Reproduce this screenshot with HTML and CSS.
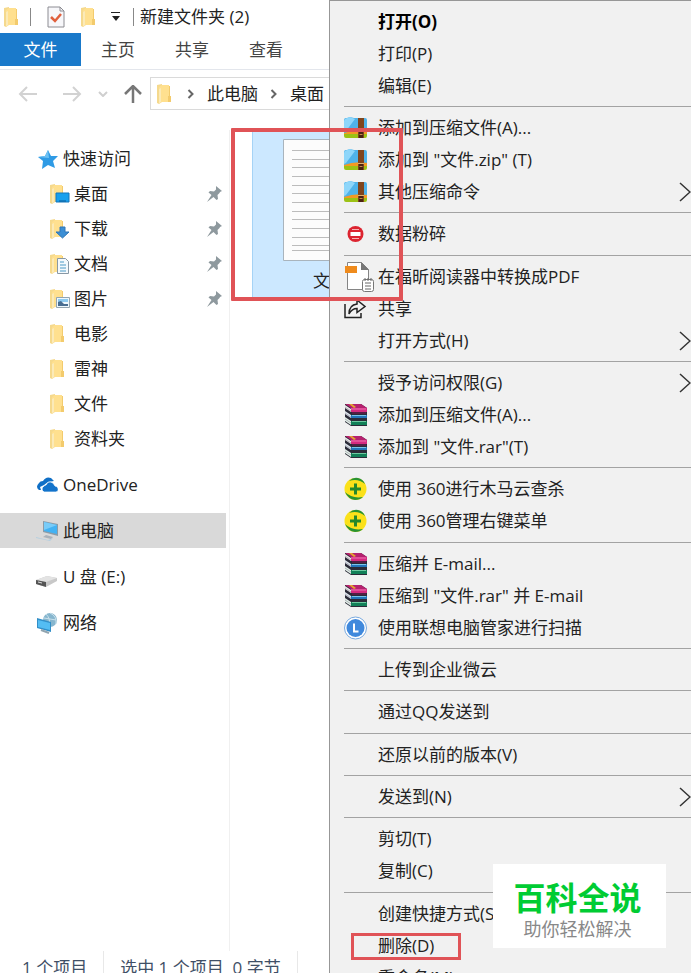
FILE: index.html
```html
<!DOCTYPE html>
<html lang="zh-CN">
<head>
  <meta charset="UTF-8" />
  <meta name="viewport" content="width=device-width, initial-scale=1.0"/>
  <title>新建文件夹 (2)</title>
  <link rel="stylesheet" href="styles.css">
</head>
<body>

  <!-- shared icons -->
  <svg class="sprite" aria-hidden="true">
    <symbol id="folder" viewBox="0 0 14 20">
      <path d="M0 1 5 0v18l-3 2-2-1z" fill="#f5d98d"/>
      <path d="M2 3 5 1h7v11h1.500v6H4l-2 2z" fill="#ffe08f"/>
      <path d="M12 2v10h-1v6h3v-6h-1V2z" fill="#f3cb6d"/>
      <path d="M2 5v15l2-2V4z" fill="#fbeab8"/>
    </symbol>
    <symbol id="pin" viewBox="0 0 16 16">
      <path d="m10 0 6 5-2 1-.5 1-2 2 .5 4-1.500 1-3-3-6.500 5 4.500-7-3-2.500L4 5l4 .5 2-2z" fill="#8e999e"/>
    </symbol>
    <symbol id="arrow" viewBox="0 0 12 20">
      <path d="m1 1 10 9-10 9" fill="none" stroke="#333" stroke-width="1.500"/>
    </symbol>
    <symbol id="crumb" viewBox="0 0 8 10">
      <path d="m1.500 1 4 4-4 4" fill="none" stroke="#666" stroke-width="2"/>
    </symbol>
    <symbol id="zip" viewBox="0 0 24 24">
      <rect x="0" y="16" width="23" height="6" rx="2" fill="#9cc216"/>
      <path d="M0 14h23v4H0z" fill="#f39a23"/>
      <path d="M0 4q0-2 2-2h1l3-1 4 1h11q2 0 2 2v11q-12-2-23 2z" fill="#4fb3ea"/>
      <path d="M0 5q0-2 3-3l3-1 5 2L2 15l-2 1z" fill="#8ed6fa"/>
      <path d="M14 2h6v20h-6z" fill="#80451d"/>
      <path d="M15 16h4v6h-4z" fill="#4a2412"/>
      <path d="M14 15.500h6" stroke="#e0b070"/>
      <path d="M15.500 18.500h3" stroke="#c98a4a"/>
    </symbol>
    <symbol id="rar" viewBox="0 0 24 24">
      <path d="M1 1h16l6 4v18H7l-6-4z" fill="#2b2b38"/>
      <path d="M1 1h16l6 4H7z" fill="#b5216f"/>
      <path d="M7 5h16v4H7z" fill="#d42a80"/>
      <path d="M7 6h15" stroke="#ee74b2"/>
      <path d="m1 2 6 4v3L1 5z" fill="#efe9ea"/>
      <path d="M8 9.500h14v1H8z" fill="#7d1450"/>
      <path d="m1 8 6 4v3l-6-4z" fill="#dfe6ee"/>
      <path d="M7 12h16v3H7z" fill="#2374b8"/>
      <path d="M8 12.500h14" stroke="#7cc3ea"/>
      <path d="m1 14 6 4v4l-6-4z" fill="#e3efe8"/>
      <path d="M7 18h16v4H7z" fill="#128058"/>
      <path d="M8 18.500h14" stroke="#6ccaa0"/>
      <path d="m1 4 6 4M1 10l6 4M1 16l6 4" stroke="#8c8c98" stroke-width=".6"/>
      <path d="m5 1 3 0 4 3-2 1z" fill="#e3a52d"/>
    </symbol>
    <symbol id="safe" viewBox="0 0 24 24">
      <circle cx="11.500" cy="12" r="11" fill="#fbe11a"/>
      <path d="M5 4Q9 0 14 1q5 1 7 6-7-6-16-3zM1 15q7 7 18 5-3 3-8 3-7-1-10-8z" fill="#299333"/>
      <path d="M11.500 6.500v11M6 12h11" stroke="#25882b" stroke-width="3"/>
    </symbol>
  </svg>

  <div class="explorer">
    <header class="title-bar">
      <svg class="folder"><use href="#folder"/></svg>
      <span class="divider"></span>
      <button class="quick" aria-label="属性">
        <svg width="18" height="22" viewBox="0 0 18 22"><path d="M1 1h12l4 4v16H1z" fill="#f7f7fa" stroke="#8c8c92"/><path d="M13 1v4h4" fill="none" stroke="#8c8c92"/><path d="m4 11 4 4 6-7" fill="none" stroke="#e0603d" stroke-width="2.500"/></svg>
      </button>
      <button class="quick" aria-label="新建文件夹"><svg class="folder"><use href="#folder"/></svg></button>
      <button class="quick" aria-label="自定义快速访问工具栏">
        <svg width="10" height="9" viewBox="0 0 10 9"><path d="M0 0h9v1H0zM1 4h8L5 9z" fill="#222"/></svg>
      </button>
      <span class="divider"></span>
      <h1>新建文件夹 (2)</h1>
    </header>

    <nav class="tabs">
      <button class="file-tab">文件</button>
      <button>主页</button>
      <button>共享</button>
      <button>查看</button>
    </nav>

    <div class="nav-bar">
      <button aria-label="后退"><svg width="20" height="16" viewBox="0 0 20 16"><path d="M9 1 2 8l7 7M2 8h17" fill="none" stroke="#d2d2d2" stroke-width="2"/></svg></button>
      <button aria-label="前进"><svg width="20" height="16" viewBox="0 0 20 16"><path d="m11 1 7 7-7 7M18 8H1" fill="none" stroke="#d2d2d2" stroke-width="2"/></svg></button>
      <button aria-label="最近浏览的位置"><svg width="10" height="6" viewBox="0 0 10 6"><path d="m1 1 4 4 4-4" fill="none" stroke="#cfcfcf" stroke-width="2"/></svg></button>
      <button aria-label="上移"><svg width="18" height="18" viewBox="0 0 18 18"><path d="m1 9 8-8 8 8M9 1v17" fill="none" stroke="#777" stroke-width="2.500"/></svg></button>
      <div class="address">
        <svg class="folder"><use href="#folder"/></svg>
        <svg class="crumb"><use href="#crumb"/></svg>
        <a href="#pc">此电脑</a>
        <svg class="crumb"><use href="#crumb"/></svg>
        <a href="#desktop">桌面</a>
      </div>
    </div>

    <div class="content">
      <aside class="sidebar">
        <a class="place" href="#quick">
          <svg viewBox="0 0 22 22"><path d="m12 2 3 6 7 0-5 5 2 7-7-3-6 4 1-8-5-4 7-1z" fill="#2f9be5"/><path d="m12 2 1 8-11-1 7-1z" fill="#6dc1f3"/></svg>
          快速访问
        </a>
        <a class="place sub" href="#desktop">
          <svg viewBox="0 0 20 20"><use href="#folder" width="14" height="20"/><path d="M6 9h13v9H6z" fill="#18a0ee" stroke="#1476bb"/><path d="M9 17h7" stroke="#0d5b94"/></svg>
          桌面
          <svg class="pin"><use href="#pin"/></svg>
        </a>
        <a class="place sub" href="#downloads">
          <svg viewBox="0 0 20 20"><use href="#folder" width="14" height="20"/><path d="M10 8h5v5h4l-6.500 6L6 13h4z" fill="#3c8fd5" stroke="#2f77b8"/></svg>
          下载
          <svg class="pin"><use href="#pin"/></svg>
        </a>
        <a class="place sub" href="#documents">
          <svg viewBox="0 0 20 20"><use href="#folder" width="14" height="20"/><path d="M7.500 4.500h8l3 3v12h-11z" fill="#f4f9fc" stroke="#8898a5"/><path d="M10 8h4M10 11h6M10 14h6M10 17h6" stroke="#4d9ac6"/></svg>
          文档
          <svg class="pin"><use href="#pin"/></svg>
        </a>
        <a class="place sub" href="#pictures">
          <svg viewBox="0 0 20 20"><use href="#folder" width="14" height="20"/><path d="M6.500 8.500h13v10h-13z" fill="#eef7fc" stroke="#94a5b0"/><path d="M8 10h10v3H8z" fill="#8dcaf0"/><path d="m8 17 0-4 3-1 3 3 4 0v2z" fill="#496d91"/></svg>
          图片
          <svg class="pin"><use href="#pin"/></svg>
        </a>
        <a class="place sub" href="#movies"><svg viewBox="0 0 20 20"><use href="#folder" width="14" height="20"/></svg>电影</a>
        <a class="place sub" href="#leishen"><svg viewBox="0 0 20 20"><use href="#folder" width="14" height="20"/></svg>雷神</a>
        <a class="place sub" href="#files"><svg viewBox="0 0 20 20"><use href="#folder" width="14" height="20"/></svg>文件</a>
        <a class="place sub" href="#data"><svg viewBox="0 0 20 20"><use href="#folder" width="14" height="20"/></svg>资料夹</a>

        <a class="place root" href="#onedrive">
          <svg viewBox="0 0 22 22"><path d="M5 16H3q-4-3 0-7 1-2 4-2 3-5 8-3l3 3-6 1-4 3-4 2z" fill="#0f6fc6"/><path d="M8 18q-4-3 0-6 1-1 2-1 2-5 7-2l2 3q4 1 3 5l-2 1z" fill="#1273cb" stroke="#fff" stroke-width=".7"/></svg>
          OneDrive
        </a>
        <a class="place root selected" href="#pc">
          <svg viewBox="0 0 22 22"><path d="m7 1 15 3v12L7 12z" fill="#8b9ba7"/><path d="m8 2 13 3v9L8 11z" fill="#42b2f3"/><path d="m8 2 13 3-13 5z" fill="#79ccf8"/><path d="m10 15 7 2-2 2-8-2z" fill="#a9b2ba"/><path d="m0 17 12 3 5-2-3 3-14-3z" fill="#b5cfe0"/></svg>
          此电脑
        </a>
        <a class="place root" href="#usb">
          <svg viewBox="0 0 22 22"><path d="m0 14 11-4 10 2v3l-11 6-10-3z" fill="#c8c8c8"/><path d="m0 14 11-4 10 2-11 4z" fill="#e3e3e3"/><path d="m0 14 10 2v5L0 18z" fill="#555"/><path d="m2 16 4 1" stroke="#ddd"/></svg>
          U 盘 (E:)
        </a>
        <a class="place root" href="#network">
          <svg viewBox="0 0 22 22"><circle cx="14" cy="8" r="7" fill="#87b6ce"/><path d="M10 2q5 5 3 12M14 1q7 3 6 11M8 6l12 2" fill="none" stroke="#c9e1ec"/><path d="m1 6 14 4v10L1 16z" fill="#328fc8"/><path d="m2 8 12 3v7L2 15z" fill="#54bdf3"/><path d="m5 18 8 3" stroke="#91a4af" stroke-width="2"/></svg>
          网络
        </a>
      </aside>

      <main class="files">
        <a class="file" href="#file">
          <svg width="94" height="122" viewBox="0 0 94 122">
            <path d="M.5.5h93v121H.5z" fill="#fcfcfc" stroke="#a9b4bd"/>
            <path d="M9 11.500h76M9 20.500h76M9 28.500h76M9 37.500h76M9 46.500h76M9 54.500h76M9 63.500h76M9 72.500h76M9 80.500h76M9 89.500h76M9 98.500h76M9 106.500h76M9 111.500h76" stroke="#bcbcbc"/>
          </svg>
          <span>文件</span>
        </a>
      </main>
    </div>

    <footer class="status">
      <span class="count">1 个项目</span>
      <span class="chosen">选中 1 个项目&nbsp; 0 字节</span>
    </footer>
  </div>

  <div class="menu" role="menu">
    <div class="group">
      <button class="default" role="menuitem">打开(O)</button>
      <button role="menuitem">打印(P)</button>
      <button role="menuitem">编辑(E)</button>
    </div>
    <div class="group">
      <button role="menuitem"><svg class="icon"><use href="#zip"/></svg>添加到压缩文件(A)...</button>
      <button role="menuitem"><svg class="icon"><use href="#zip"/></svg>添加到 "文件.zip" (T)</button>
      <button role="menuitem"><svg class="icon"><use href="#zip"/></svg>其他压缩命令<svg class="arrow"><use href="#arrow"/></svg></button>
    </div>
    <div class="group">
      <button role="menuitem">
        <svg class="icon" viewBox="0 0 24 24"><circle cx="11.500" cy="12" r="8" fill="#dc2430"/><path d="M6.500 10h10v4h-10z" fill="#fff"/><path d="M8 7.500h7M8 16.500h7" stroke="#f5b3b5"/></svg>数据粉碎
      </button>
    </div>
    <div class="group">
      <button role="menuitem">
        <svg class="icon pdf" viewBox="0 0 31 32"><path d="M3.500 1.500h14l7 7v20h-21z" fill="#fff" stroke="#858585"/><path d="M17 1v8h8z" fill="#777"/><path d="M1 5h12v7H1z" fill="#ef8b1d"/><rect x="18.500" y="18.500" width="11" height="12" rx="2" fill="#fff" stroke="#777"/><path d="M21 22h6M21 25h6M21 28h6M21 17v3M24 17v3M27 17v3" stroke="#666"/></svg>在福昕阅读器中转换成PDF
      </button>
      <button role="menuitem">
        <svg class="icon" viewBox="0 0 24 24"><path d="M1 7v13.500h16V16" fill="none" stroke="#222" stroke-width="1.500"/><path d="M5 17q0-9 8-10V3l8 6.500-8 6v-4q-5 0-8 5.500z" fill="#f1f1f1" stroke="#222" stroke-width="1.500"/></svg>共享
      </button>
      <button role="menuitem">打开方式(H)<svg class="arrow"><use href="#arrow"/></svg></button>
    </div>
    <div class="group">
      <button role="menuitem">授予访问权限(G)<svg class="arrow"><use href="#arrow"/></svg></button>
      <button role="menuitem"><svg class="icon"><use href="#rar"/></svg>添加到压缩文件(A)...</button>
      <button role="menuitem"><svg class="icon"><use href="#rar"/></svg>添加到 "文件.rar"(T)</button>
    </div>
    <div class="group">
      <button role="menuitem"><svg class="icon"><use href="#safe"/></svg>使用 360进行木马云查杀</button>
      <button role="menuitem"><svg class="icon"><use href="#safe"/></svg>使用 360管理右键菜单</button>
    </div>
    <div class="group">
      <button role="menuitem"><svg class="icon"><use href="#rar"/></svg>压缩并 E-mail...</button>
      <button role="menuitem"><svg class="icon"><use href="#rar"/></svg>压缩到 "文件.rar" 并 E-mail</button>
      <button role="menuitem">
        <svg class="icon" viewBox="0 0 24 24"><circle cx="11.500" cy="12" r="11" fill="#fff" stroke="#78a9df"/><circle cx="11.500" cy="12" r="9" fill="#4089dc"/><path d="M10 7.500v8h4.500" fill="none" stroke="#fff" stroke-width="2"/></svg>使用联想电脑管家进行扫描
      </button>
    </div>
    <div class="group">
      <button role="menuitem">上传到企业微云</button>
    </div>
    <div class="group">
      <button role="menuitem">通过QQ发送到</button>
    </div>
    <div class="group">
      <button role="menuitem">还原以前的版本(V)</button>
    </div>
    <div class="group">
      <button role="menuitem">发送到(N)<svg class="arrow"><use href="#arrow"/></svg></button>
    </div>
    <div class="group">
      <button role="menuitem">剪切(T)</button>
      <button role="menuitem">复制(C)</button>
    </div>
    <div class="group">
      <button role="menuitem">创建快捷方式(S)</button>
      <button class="marked" role="menuitem">删除(D)</button>
      <button role="menuitem">重命名(M)</button>
    </div>
  </div>

  <div class="highlight"></div>

  <div class="brand">
    <strong>百科全说</strong>
    <span>助你轻松解决</span>
  </div>

</body>
</html>
```
FILE: styles.css
```css
*,
*::before {
  box-sizing: border-box;
}

body {
  position: relative;
  height: 100vh;
  margin: 0;
  overflow: hidden;
  font-family: "Open Sans", "Noto Sans CJK SC", sans-serif;
  font-size: 17px;
  line-height: 24px;
  color: #222;
  background: #fff;
  white-space: nowrap;
}

button {
  padding: 0;
  border: none;
  background: none;
  font: inherit;
  color: inherit;
}

a {
  color: inherit;
  text-decoration: none;
}

svg {
  flex: none;
}

.sprite {
  position: absolute;
  width: 0;
  height: 0;
}

.folder {
  width: 14px;
  height: 20px;
}

/* Explorer window */
.explorer {
  display: flex;
  flex-direction: column;
  height: 100%;
}

.title-bar {
  display: flex;
  align-items: center;
  height: 33px;
  padding-left: 4px;
}

.title-bar .divider {
  width: 1px;
  height: 18px;
  margin-left: 12px;
  background: #888;
}

.quick {
  display: flex;
  margin-left: 16px;
}

.title-bar .divider + h1 {
  margin: 0 0 0 6px;
  font-size: 17px;
  font-weight: normal;
}

.tabs {
  display: flex;
  height: 37px;
  padding-bottom: 3px;
  border-bottom: 1px solid #e3e6ec;
  color: #444;
}

.tabs button {
  width: 74px;
}

.tabs .file-tab {
  width: 81px;
  background: #1979ca;
  color: #fff;
}

.nav-bar {
  display: flex;
  align-items: center;
  gap: 16px;
  padding: 7px 0 0 18px;
}

.nav-bar button {
  display: flex;
}

.nav-bar button:nth-child(2) {
  margin-left: 8px;
}

.address {
  display: flex;
  flex: 1;
  align-items: center;
  gap: 12px;
  height: 33px;
  margin-left: -8px;
  padding-left: 6px;
  border: 1px solid #dadada;
}

.crumb {
  width: 8px;
  height: 10px;
}

.address .folder {
  margin-right: 4px;
}

.content {
  display: flex;
  flex: 1;
  min-height: 0;
  padding-top: 20px;
}

.sidebar {
  width: 230px;
  padding: 11px 3px 0 0;
  border-right: 1px solid #f0f0f0;
}

.place {
  display: flex;
  align-items: center;
  gap: 5px;
  height: 35px;
  padding: 0 4px 0 36px;
}

.place svg {
  width: 22px;
  height: 22px;
}

.place.sub {
  gap: 4px;
  padding-left: 50px;
}

.place.sub svg {
  width: 20px;
  height: 20px;
}

.place.sub .pin {
  width: 16px;
  height: 16px;
  margin-left: auto;
}

.place.root {
  margin-top: 11px;
}

.place.selected {
  background: #d9d9d9;
}

.files {
  flex: 1;
  padding-left: 22px;
}

.file {
  display: flex;
  flex-direction: column;
  align-items: center;
  gap: 8px;
  width: 156px;
  height: 168px;
  padding-top: 8px;
  border: 1px solid #a5d3f6;
  background: #cce8ff;
}

.status {
  display: flex;
  height: 22px;
  padding-left: 22px;
  overflow: hidden;
  line-height: 34px;
  color: #3f4f66;
}

.status span {
  padding-right: 16px;
  border-right: 1px solid #e8e8e8;
}

.status .chosen {
  padding-left: 16px;
}

/* Context menu */
.menu {
  position: absolute;
  top: 0;
  bottom: 0;
  left: 329px;
  right: 0;
  padding-left: 14px;
  overflow: hidden;
  border-top: 1px solid #979797;
  border-left: 1px solid #979797;
  background: #f1f1f1;
}

.group {
  padding: 5px 0 4px;
  border-bottom: 1px solid #a3a3a3;
}

.group:nth-child(3n) {
  padding-bottom: 5px;
}

.group button {
  position: relative;
  display: flex;
  align-items: center;
  width: 100%;
  height: 32px;
  padding-left: 34px;
}

.group .icon {
  width: 24px;
  height: 24px;
  margin-left: -34px;
  margin-right: 10px;
}

.group .pdf {
  width: 31px;
  height: 32px;
  margin-right: 3px;
}

.group .arrow {
  width: 12px;
  height: 20px;
  margin-left: auto;
}

.group .default {
  font-weight: bold;
  color: #000;
}

.marked::before {
  content: "";
  position: absolute;
  top: 3px;
  left: 7px;
  width: 110px;
  height: 27px;
  border: 3px solid #e05357;
}

.highlight {
  position: absolute;
  top: 128px;
  left: 231px;
  width: 172px;
  height: 173px;
  border: 4px solid #e05357;
  border-radius: 1px;
}

.brand {
  position: absolute;
  right: 25px;
  bottom: 25px;
  display: flex;
  flex-direction: column;
  align-items: center;
  width: 173px;
  height: 84px;
  padding: 14px 4px 0 0;
  background: #fff;
}

.brand strong {
  font-size: 32px;
  line-height: 40px;
  color: #0c3;
}

.brand span {
  font-size: 18px;
  line-height: 22px;
  color: #888;
}
```
